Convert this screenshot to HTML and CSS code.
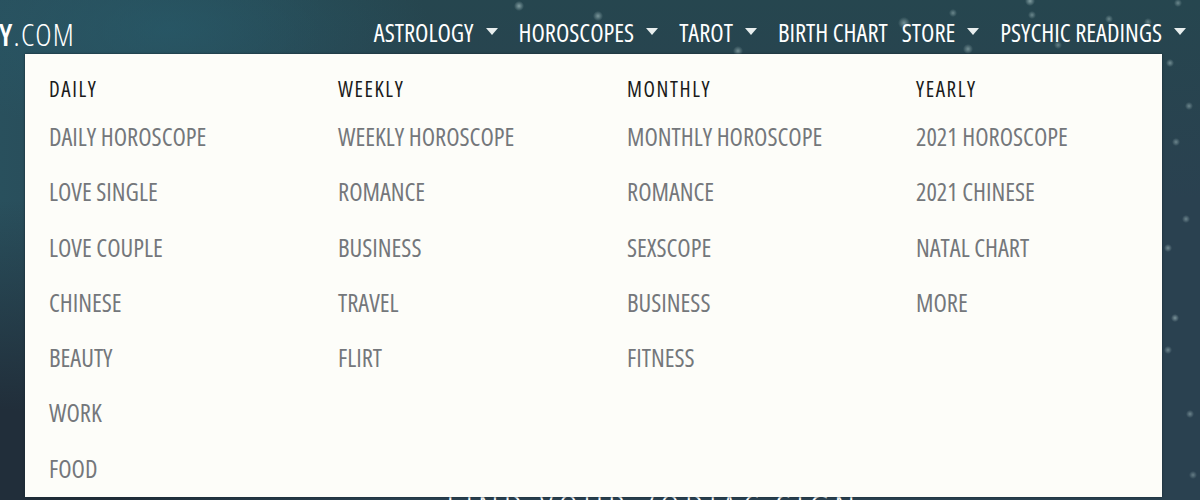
FILE: index.html
```html
<!DOCTYPE html>
<html lang="en">
<head>
    <meta charset="UTF-8">
    <meta name="viewport" content="width=device-width, initial-scale=1.0">
    <title>Horoscopes</title>
    <link rel="stylesheet" href="styles.css">
</head>
<body>
    <header class="site-header">
        <a class="logo" href="#"><b>Y</b>.COM</a>
        <nav class="main-nav">
            <a class="nav-item has-caret" href="#">ASTROLOGY</a>
            <a class="nav-item has-caret" href="#">HOROSCOPES</a>
            <a class="nav-item has-caret" href="#">TAROT</a>
            <a class="nav-item" href="#">BIRTH CHART</a>
            <a class="nav-item has-caret" href="#">STORE</a>
            <a class="nav-item has-caret" href="#">PSYCHIC READINGS</a>
        </nav>
    </header>

    <div class="mega-menu">
        <div class="menu-col">
            <h4 class="menu-title">DAILY</h4>
            <a class="menu-link" href="#">DAILY HOROSCOPE</a>
            <a class="menu-link" href="#">LOVE SINGLE</a>
            <a class="menu-link" href="#">LOVE COUPLE</a>
            <a class="menu-link" href="#">CHINESE</a>
            <a class="menu-link" href="#">BEAUTY</a>
            <a class="menu-link" href="#">WORK</a>
            <a class="menu-link" href="#">FOOD</a>
        </div>
        <div class="menu-col">
            <h4 class="menu-title">WEEKLY</h4>
            <a class="menu-link" href="#">WEEKLY HOROSCOPE</a>
            <a class="menu-link" href="#">ROMANCE</a>
            <a class="menu-link" href="#">BUSINESS</a>
            <a class="menu-link" href="#">TRAVEL</a>
            <a class="menu-link" href="#">FLIRT</a>
        </div>
        <div class="menu-col">
            <h4 class="menu-title">MONTHLY</h4>
            <a class="menu-link" href="#">MONTHLY HOROSCOPE</a>
            <a class="menu-link" href="#">ROMANCE</a>
            <a class="menu-link" href="#">SEXSCOPE</a>
            <a class="menu-link" href="#">BUSINESS</a>
            <a class="menu-link" href="#">FITNESS</a>
        </div>
        <div class="menu-col">
            <h4 class="menu-title">YEARLY</h4>
            <a class="menu-link" href="#">2021 HOROSCOPE</a>
            <a class="menu-link" href="#">2021 CHINESE</a>
            <a class="menu-link" href="#">NATAL CHART</a>
            <a class="menu-link" href="#">MORE</a>
        </div>
    </div>

    <h1 class="page-title">FIND YOUR ZODIAC SIGN</h1>
</body>
</html>
```

FILE: styles.css
```css
html, body {
    height: 100%;
}

body {
    margin: 0;
    overflow: hidden;
    position: relative;
    font-family: "Open Sans", "Liberation Sans", sans-serif;
    font-stretch: 75%;
    background-color: #2a4150;
    background-image:
        radial-gradient(circle at 519px 6px, rgba(190, 215, 215, 0.6) 0, transparent 5px),
        radial-gradient(circle at 598px 16px, rgba(190, 215, 215, 0.55) 0, transparent 5px),
        radial-gradient(circle at 738px 51px, rgba(190, 215, 215, 0.5) 0, transparent 5px),
        radial-gradient(circle at 904px 23px, rgba(190, 215, 215, 0.5) 0, transparent 6px),
        radial-gradient(circle at 953px 13px, rgba(190, 215, 215, 0.45) 0, transparent 4px),
        radial-gradient(circle at 968px 49px, rgba(190, 215, 215, 0.5) 0, transparent 5px),
        radial-gradient(circle at 1030px 1px, rgba(190, 215, 215, 0.6) 0, transparent 5px),
        radial-gradient(circle at 1032px 15px, rgba(190, 215, 215, 0.45) 0, transparent 4px),
        radial-gradient(circle at 1058px 45px, rgba(190, 215, 215, 0.4) 0, transparent 4px),
        radial-gradient(circle at 1109px 19px, rgba(190, 215, 215, 0.45) 0, transparent 4px),
        radial-gradient(circle at 1148px 22px, rgba(190, 215, 215, 0.4) 0, transparent 4px),
        radial-gradient(circle at 1178px 3px, rgba(190, 215, 215, 0.45) 0, transparent 4px),
        radial-gradient(circle at 1170px 63px, rgba(190, 215, 215, 0.5) 0, transparent 4px),
        radial-gradient(circle at 1189px 106px, rgba(190, 215, 215, 0.45) 0, transparent 4px),
        radial-gradient(circle at 1176px 142px, rgba(190, 215, 215, 0.45) 0, transparent 4px),
        radial-gradient(circle at 1186px 219px, rgba(190, 215, 215, 0.45) 0, transparent 4px),
        radial-gradient(circle at 1168px 248px, rgba(190, 215, 215, 0.5) 0, transparent 4px),
        radial-gradient(circle at 1175px 318px, rgba(190, 215, 215, 0.55) 0, transparent 4px),
        radial-gradient(circle at 1168px 350px, rgba(190, 215, 215, 0.45) 0, transparent 4px),
        radial-gradient(circle at 1190px 414px, rgba(190, 215, 215, 0.45) 0, transparent 4px),
        radial-gradient(circle at 1193px 475px, rgba(190, 215, 215, 0.4) 0, transparent 4px),
        radial-gradient(ellipse 260px 110px at 170px 30px, rgba(40, 92, 108, 0.65) 0, transparent 100%),
        radial-gradient(ellipse 400px 300px at 0 500px, #212e3a 30%, rgba(33, 46, 58, 0) 100%),
        linear-gradient(90deg, #29505d 0, rgba(41, 80, 93, 0) 320px),
        linear-gradient(180deg, #26464f 0, #2a4150 200px);
}

a {
    color: inherit;
    text-decoration: none;
}

.site-header {
    height: 54px;
    display: flex;
    justify-content: space-between;
    align-items: center;
    color: #fff;
}

.logo {
    width: 75px;
    display: flex;
    justify-content: flex-end;
    padding-top: 13px;
    font-size: 31px;
    font-weight: 300;
    letter-spacing: 1.2px;
    white-space: pre;
}

.logo b {
    font-weight: 600;
}

.main-nav {
    display: flex;
    align-items: center;
    padding-top: 12px;
}

.nav-item {
    display: flex;
    align-items: center;
    padding: 0 7px;
    font-size: 24.5px;
    line-height: 30px;
}

.has-caret::after {
    content: "";
    margin-left: 12px;
    margin-right: 7px;
    margin-top: -3px;
    border-left: 6px solid transparent;
    border-right: 6px solid transparent;
    border-top: 7px solid #e8eeee;
}

.mega-menu {
    position: absolute;
    top: 54px;
    left: 25px;
    width: 1137px;
    height: 443px;
    box-sizing: border-box;
    padding: 23px 0 0 24px;
    display: grid;
    grid-template-columns: repeat(4, 289px);
    background-color: #fdfdf9;
    box-shadow: 0 0 2px #16262f;
}

.menu-col {
    display: flex;
    flex-direction: column;
}

.menu-title {
    margin: 0 0 8px;
    font-size: 21px;
    line-height: 24px;
    font-weight: 500;
    letter-spacing: 1.6px;
    color: #1b1b1b;
}

.menu-link {
    font-size: 24.5px;
    line-height: 55.3px;
    color: #74777b;
}

.page-title {
    margin: 443px 0 0;
    padding-left: 106px;
    text-align: center;
    font-size: 40px;
    font-weight: 300;
    line-height: 24px;
    letter-spacing: 4.5px;
    color: #fff;
}
```
